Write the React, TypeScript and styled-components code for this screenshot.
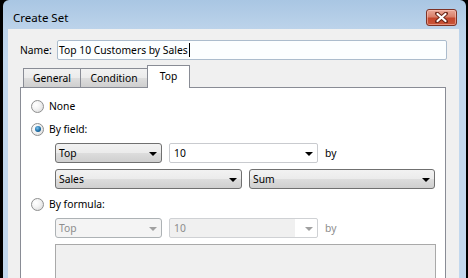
import React from "react";
import styled, { createGlobalStyle, css } from "styled-components";

const GlobalStyle = createGlobalStyle`
  html, body { margin: 0; padding: 0; background: #000; }
  body { font-family: "Noto Sans", "Open Sans", sans-serif; font-size: 10.3px; color: #000; }
  * { box-sizing: border-box; }
`;

const Screen = styled.div`
  width: 468px;
  height: 278px;
  overflow: hidden;
  background: #000;
  padding-left: 3px;
`;

const Window = styled.div`
  width: 463px;
  height: 100%;
  display: flex;
  flex-direction: column;
  border-radius: 6px 6px 0 0;
  background: linear-gradient(to bottom, #a9c6e3 0px, #bcd3ea 29px, #c2d8ee 60px, #c2d8ee 100%);
`;

const TitleBar = styled.div`
  height: 29px;
  padding: 5px 9px 0 10px;
  display: flex;
  align-items: center;
  justify-content: space-between;
`;

const Title = styled.span`
  font-size: 11.5px;
  color: #000;
`;

const CloseButton = styled.div`
  width: 31px;
  height: 17px;
  border-radius: 3px;
  border: 1px solid #7e3326;
  background: linear-gradient(to bottom, #e9a898 0%, #d9806b 45%, #c4462c 55%, #c9563a 100%);
  display: flex;
  align-items: center;
  justify-content: center;
  box-shadow: inset 0 0 0 1px rgba(255, 210, 200, 0.5);
`;

const ClientArea = styled.div`
  flex: 1;
  margin: 0 7px 0 5px;
  background: #f0f0f0;
  padding: 11px 12px 0 12px;
  display: flex;
  flex-direction: column;
`;

const NameRow = styled.div`
  display: flex;
  align-items: center;
  height: 20px;
`;

const Label = styled.span`
  width: 37px;
  flex: none;
`;

const TextInput = styled.div`
  flex: 1;
  height: 20px;
  border: 1px solid #abbccd;
  border-radius: 2px;
  background: #fbfeff;
  padding: 0 2px 0 1px;
  display: flex;
  align-items: center;
  white-space: nowrap;
`;

const Caret = styled.span`
  display: inline-block;
  width: 1px;
  height: 14px;
  background: #000;
  margin-left: 1px;
`;

const TabStrip = styled.div`
  margin-top: 5px;
  height: 22px;
  display: flex;
  align-items: flex-end;
  padding-left: 3px;
  position: relative;
  z-index: 1;
`;

const Tab = styled.div<{ $active?: boolean; $width: number }>`
  width: ${(p) => p.$width}px;
  height: 19px;
  border: 1px solid #898c95;
  border-bottom: none;
  margin-left: -1px;
  display: flex;
  align-items: center;
  justify-content: center;
  background: linear-gradient(to bottom, #f2f2f2 0%, #ebebeb 50%, #dddddd 51%, #cfcfcf 100%);
  &:first-child { margin-left: 0; }
  ${(p) =>
    p.$active &&
    css`
      height: 23px;
      margin-bottom: -1px;
      background: #fff;
      padding-bottom: 3px;
    `}
`;

const Panel = styled.div`
  flex: 1;
  margin-right: 1px;
  border: 1px solid #898c95;
  border-bottom: none;
  background: #fff;
  padding: 10px 10px 0 10px;
  display: flex;
  flex-direction: column;
`;

const RadioRow = styled.div<{ $gap?: number }>`
  display: flex;
  align-items: center;
  height: 16px;
  gap: 5px;
  margin-top: ${(p) => p.$gap ?? 0}px;
`;

const RadioCircle = styled.span<{ $checked?: boolean }>`
  width: 13px;
  height: 13px;
  border-radius: 50%;
  border: 1px solid #8e8f8f;
  background: radial-gradient(circle at 35% 35%, #ffffff 0%, #f4f4f4 40%, #d5d5d5 100%);
  display: flex;
  align-items: center;
  justify-content: center;
  flex: none;
  ${(p) =>
    p.$checked &&
    css`
      &::after {
        content: "";
        width: 6px;
        height: 6px;
        border-radius: 50%;
        background: radial-gradient(circle at 40% 35%, #7fc3ec 0%, #1d6fa8 55%, #0d3f6a 100%);
      }
    `}
`;

const Group = styled.div<{ $top: number }>`
  margin-left: 24px;
  margin-top: ${(p) => p.$top}px;
  display: flex;
  flex-direction: column;
  gap: 6px;
`;

const ControlRow = styled.div<{ $gap: number }>`
  display: flex;
  align-items: center;
  gap: ${(p) => p.$gap}px;
`;

const Select = styled.div<{ $width: number; $disabled?: boolean }>`
  width: ${(p) => p.$width}px;
  height: 20px;
  border: 1px solid #707070;
  border-radius: 3px;
  background: linear-gradient(to bottom, #f2f2f2 0%, #ebebeb 50%, #dddddd 51%, #cfcfcf 100%);
  display: flex;
  align-items: center;
  justify-content: space-between;
  padding: 0 4px 0 3px;
  ${(p) =>
    p.$disabled &&
    css`
      border-color: #adb2b5;
      background: #f4f4f4;
      color: #8d8d8d;
    `}
`;

const Combo = styled.div<{ $width: number; $disabled?: boolean }>`
  width: ${(p) => p.$width}px;
  height: 20px;
  border: 1px solid #c9cbcf;
  border-radius: 2px;
  background: #fff;
  display: flex;
  align-items: center;
  justify-content: space-between;
  padding: 0 4px 0 4px;
  ${(p) =>
    p.$disabled &&
    css`
      background: linear-gradient(to right, #f0f0f0 0, #f0f0f0 calc(100% - 22px), #fff calc(100% - 22px));
      border-color: #cfd1d4;
      color: #8d8d8d;
    `}
`;

const Arrow = styled.span<{ $disabled?: boolean }>`
  width: 0;
  height: 0;
  border-left: 4px solid transparent;
  border-right: 4px solid transparent;
  border-top: 4px solid ${(p) => (p.$disabled ? "#a0a0a0" : "#000")};
  margin-top: 1px;
`;

const ByText = styled.span<{ $disabled?: boolean }>`
  color: ${(p) => (p.$disabled ? "#8d8d8d" : "#000")};
`;

const TextArea = styled.div`
  margin-left: 24px;
  margin-top: 6px;
  width: 381px;
  flex: 1;
  border: 1px solid #a9a9a9;
  border-bottom: none;
  background: #f0f0f0;
`;

export default function App() {
  return (
    <>
      <GlobalStyle />
      <Screen>
        <Window>
          <TitleBar>
            <Title>Create Set</Title>
            <CloseButton>
              <svg width="13" height="11" viewBox="0 0 13 11">
                <path d="M2 1.5 L11 9.5 M11 1.5 L2 9.5" stroke="#6b2518" strokeWidth="4" strokeLinecap="round" />
                <path d="M2.5 2 L10.5 9 M10.5 2 L2.5 9" stroke="#fff" strokeWidth="2.2" strokeLinecap="round" />
              </svg>
            </CloseButton>
          </TitleBar>
          <ClientArea>
            <NameRow>
              <Label>Name:</Label>
              <TextInput>
                Top 10 Customers by Sales
                <Caret />
              </TextInput>
            </NameRow>
            <TabStrip>
              <Tab $width={58}>General</Tab>
              <Tab $width={68}>Condition</Tab>
              <Tab $width={43} $active>Top</Tab>
            </TabStrip>
            <Panel>
              <RadioRow>
                <RadioCircle />
                <span>None</span>
              </RadioRow>
              <RadioRow $gap={7}>
                <RadioCircle $checked />
                <span>By field:</span>
              </RadioRow>
              <Group $top={6}>
                <ControlRow $gap={7}>
                  <Select $width={107}>
                    <span>Top</span>
                    <Arrow />
                  </Select>
                  <Combo $width={149}>
                    <span>10</span>
                    <Arrow />
                  </Combo>
                  <ByText>by</ByText>
                </ControlRow>
                <ControlRow $gap={7}>
                  <Select $width={187}>
                    <span>Sales</span>
                    <Arrow />
                  </Select>
                  <Select $width={186}>
                    <span>Sum</span>
                    <Arrow />
                  </Select>
                </ControlRow>
              </Group>
              <RadioRow $gap={7}>
                <RadioCircle />
                <span>By formula:</span>
              </RadioRow>
              <Group $top={6}>
                <ControlRow $gap={7}>
                  <Select $width={107} $disabled>
                    <span>Top</span>
                    <Arrow $disabled />
                  </Select>
                  <Combo $width={149} $disabled>
                    <span>10</span>
                    <Arrow $disabled />
                  </Combo>
                  <ByText $disabled>by</ByText>
                </ControlRow>
              </Group>
              <TextArea />
            </Panel>
          </ClientArea>
        </Window>
      </Screen>
    </>
  );
}
